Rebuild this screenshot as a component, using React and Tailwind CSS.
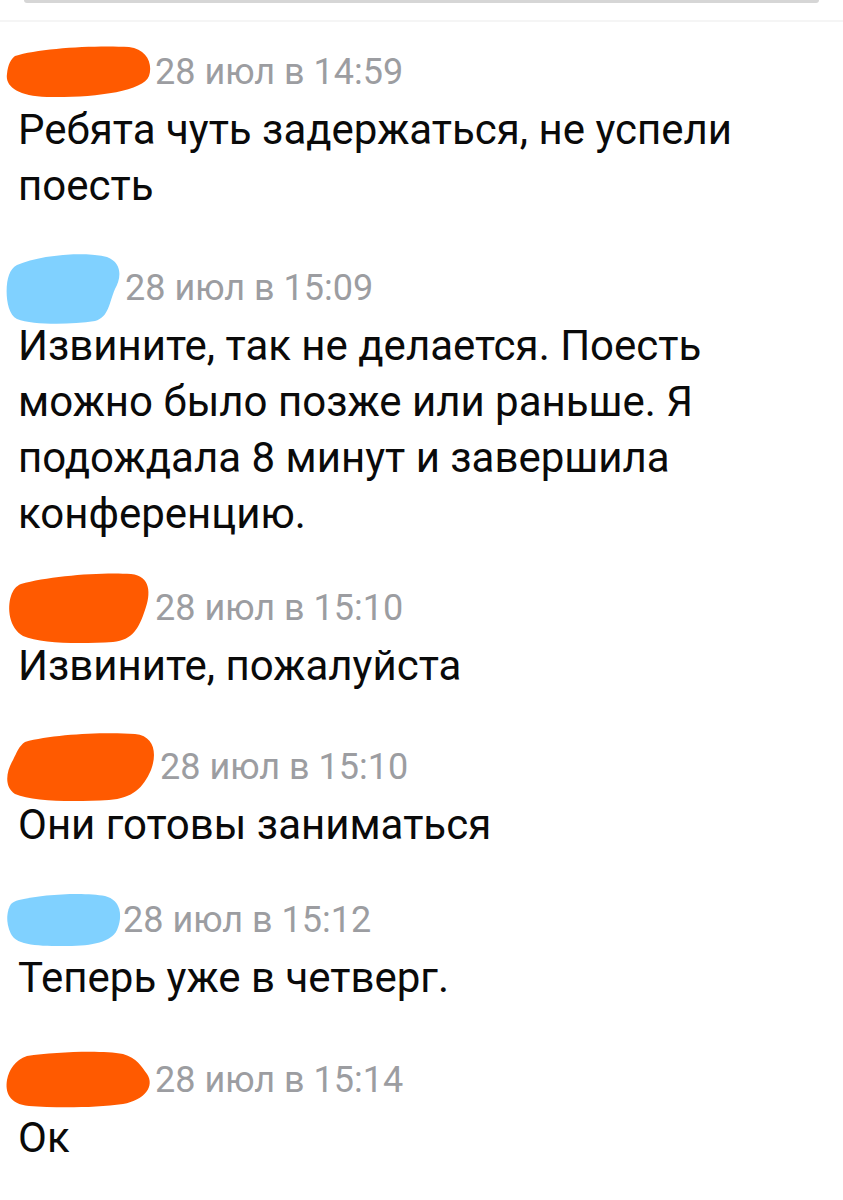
const ORANGE = "#ff5a00";
const BLUE = "#80d1ff";

// scribbles covering the names
const blobs = {
  o1: { w: 150, h: 52, c: ORANGE, d: "M10 10 C34 2 92 -1 124 1 C142 3 148 18 144 30 C138 46 86 52 42 51 C12 50 0 40 2 28 C3 18 6 13 10 10 Z" },
  b1: { w: 120, h: 74, c: BLUE, d: "M12 14 C34 4 80 0 102 6 C118 12 116 28 110 38 C104 52 104 66 90 70 C64 74 28 74 12 68 C0 62 0 34 4 24 C6 19 8 16 12 14 Z" },
  o2: { w: 150, h: 72, c: ORANGE, d: "M16 12 C44 4 96 0 126 2 C146 4 146 22 140 38 C134 56 128 68 108 70 C76 72 36 72 18 64 C4 56 2 36 6 24 C8 18 11 14 16 12 Z" },
  o3: { w: 155, h: 70, c: ORANGE, d: "M20 10 C48 2 100 0 130 2 C150 4 152 22 146 38 C138 56 128 66 104 68 C70 70 28 70 10 62 C-2 54 2 38 8 28 C12 20 14 14 20 10 Z" },
  b2: { w: 118, h: 56, c: BLUE, d: "M14 8 C38 2 80 0 100 4 C116 8 118 24 112 38 C106 50 88 54 62 54 C34 54 12 54 6 42 C0 30 2 18 6 12 C8 10 10 9 14 8 Z" },
  o4: { w: 150, h: 60, c: ORANGE, d: "M22 6 C50 2 96 0 118 4 C132 8 136 16 142 24 C150 36 140 50 118 54 C90 58 50 58 24 56 C4 54 0 42 2 30 C4 20 10 10 22 6 Z" },
};

const messages = [
  { blob: "o1", pad: "pt-[20px]", time: "28 июл в 14:59", text: ["Ребята чуть задержаться, не успели", "поесть"] },
  { blob: "b1", pad: "pt-[44px]", time: "28 июл в 15:09", text: ["Извините, так не делается. Поесть", "можно было позже или раньше. Я", "подождала 8 минут и завершила", "конференцию."] },
  { blob: "o2", pad: "pt-[36px]", time: "28 июл в 15:10", text: ["Извините, пожалуйста"] },
  { blob: "o3", pad: "pt-[43px]", time: "28 июл в 15:10", text: ["Они готовы заниматься"] },
  { blob: "b2", pad: "pt-[37px]", time: "28 июл в 15:12", text: ["Теперь уже в четверг."] },
  { blob: "o4", pad: "pt-[44px]", time: "28 июл в 15:14", text: ["Ок"] },
];

function Blob({ id }) {
  const b = blobs[id];
  return (
    <svg width={b.w} height={b.h} viewBox={`0 0 ${b.w} ${b.h}`} className="shrink-0">
      <path d={b.d} fill={b.c} />
    </svg>
  );
}

function Message({ msg }) {
  return (
    <div className={msg.pad}>
      <div className="flex h-[60px] items-center pl-[5px]">
        <Blob id={msg.blob} />
        <span className="text-[36px] leading-none text-[#9c9da1]">{msg.time}</span>
      </div>
      <div className="pl-[18px] text-[42px] leading-[56px] text-[#0a0a0a]">
        {msg.text.map((line, i) => (
          <div key={i} className="whitespace-nowrap">{line}</div>
        ))}
      </div>
    </div>
  );
}

export default function App() {
  return (
    <div className="min-h-[1200px] w-[843px] bg-white font-['Roboto',sans-serif]">
      <div className="mx-[24px] h-[3px] rounded-b-[20px] bg-[#d6d6d6]" />
      <div className="mt-[17px] h-[2px] bg-[#f5f5f5]" />
      {messages.map((m, i) => (
        <Message key={i} msg={m} />
      ))}
    </div>
  );
}
